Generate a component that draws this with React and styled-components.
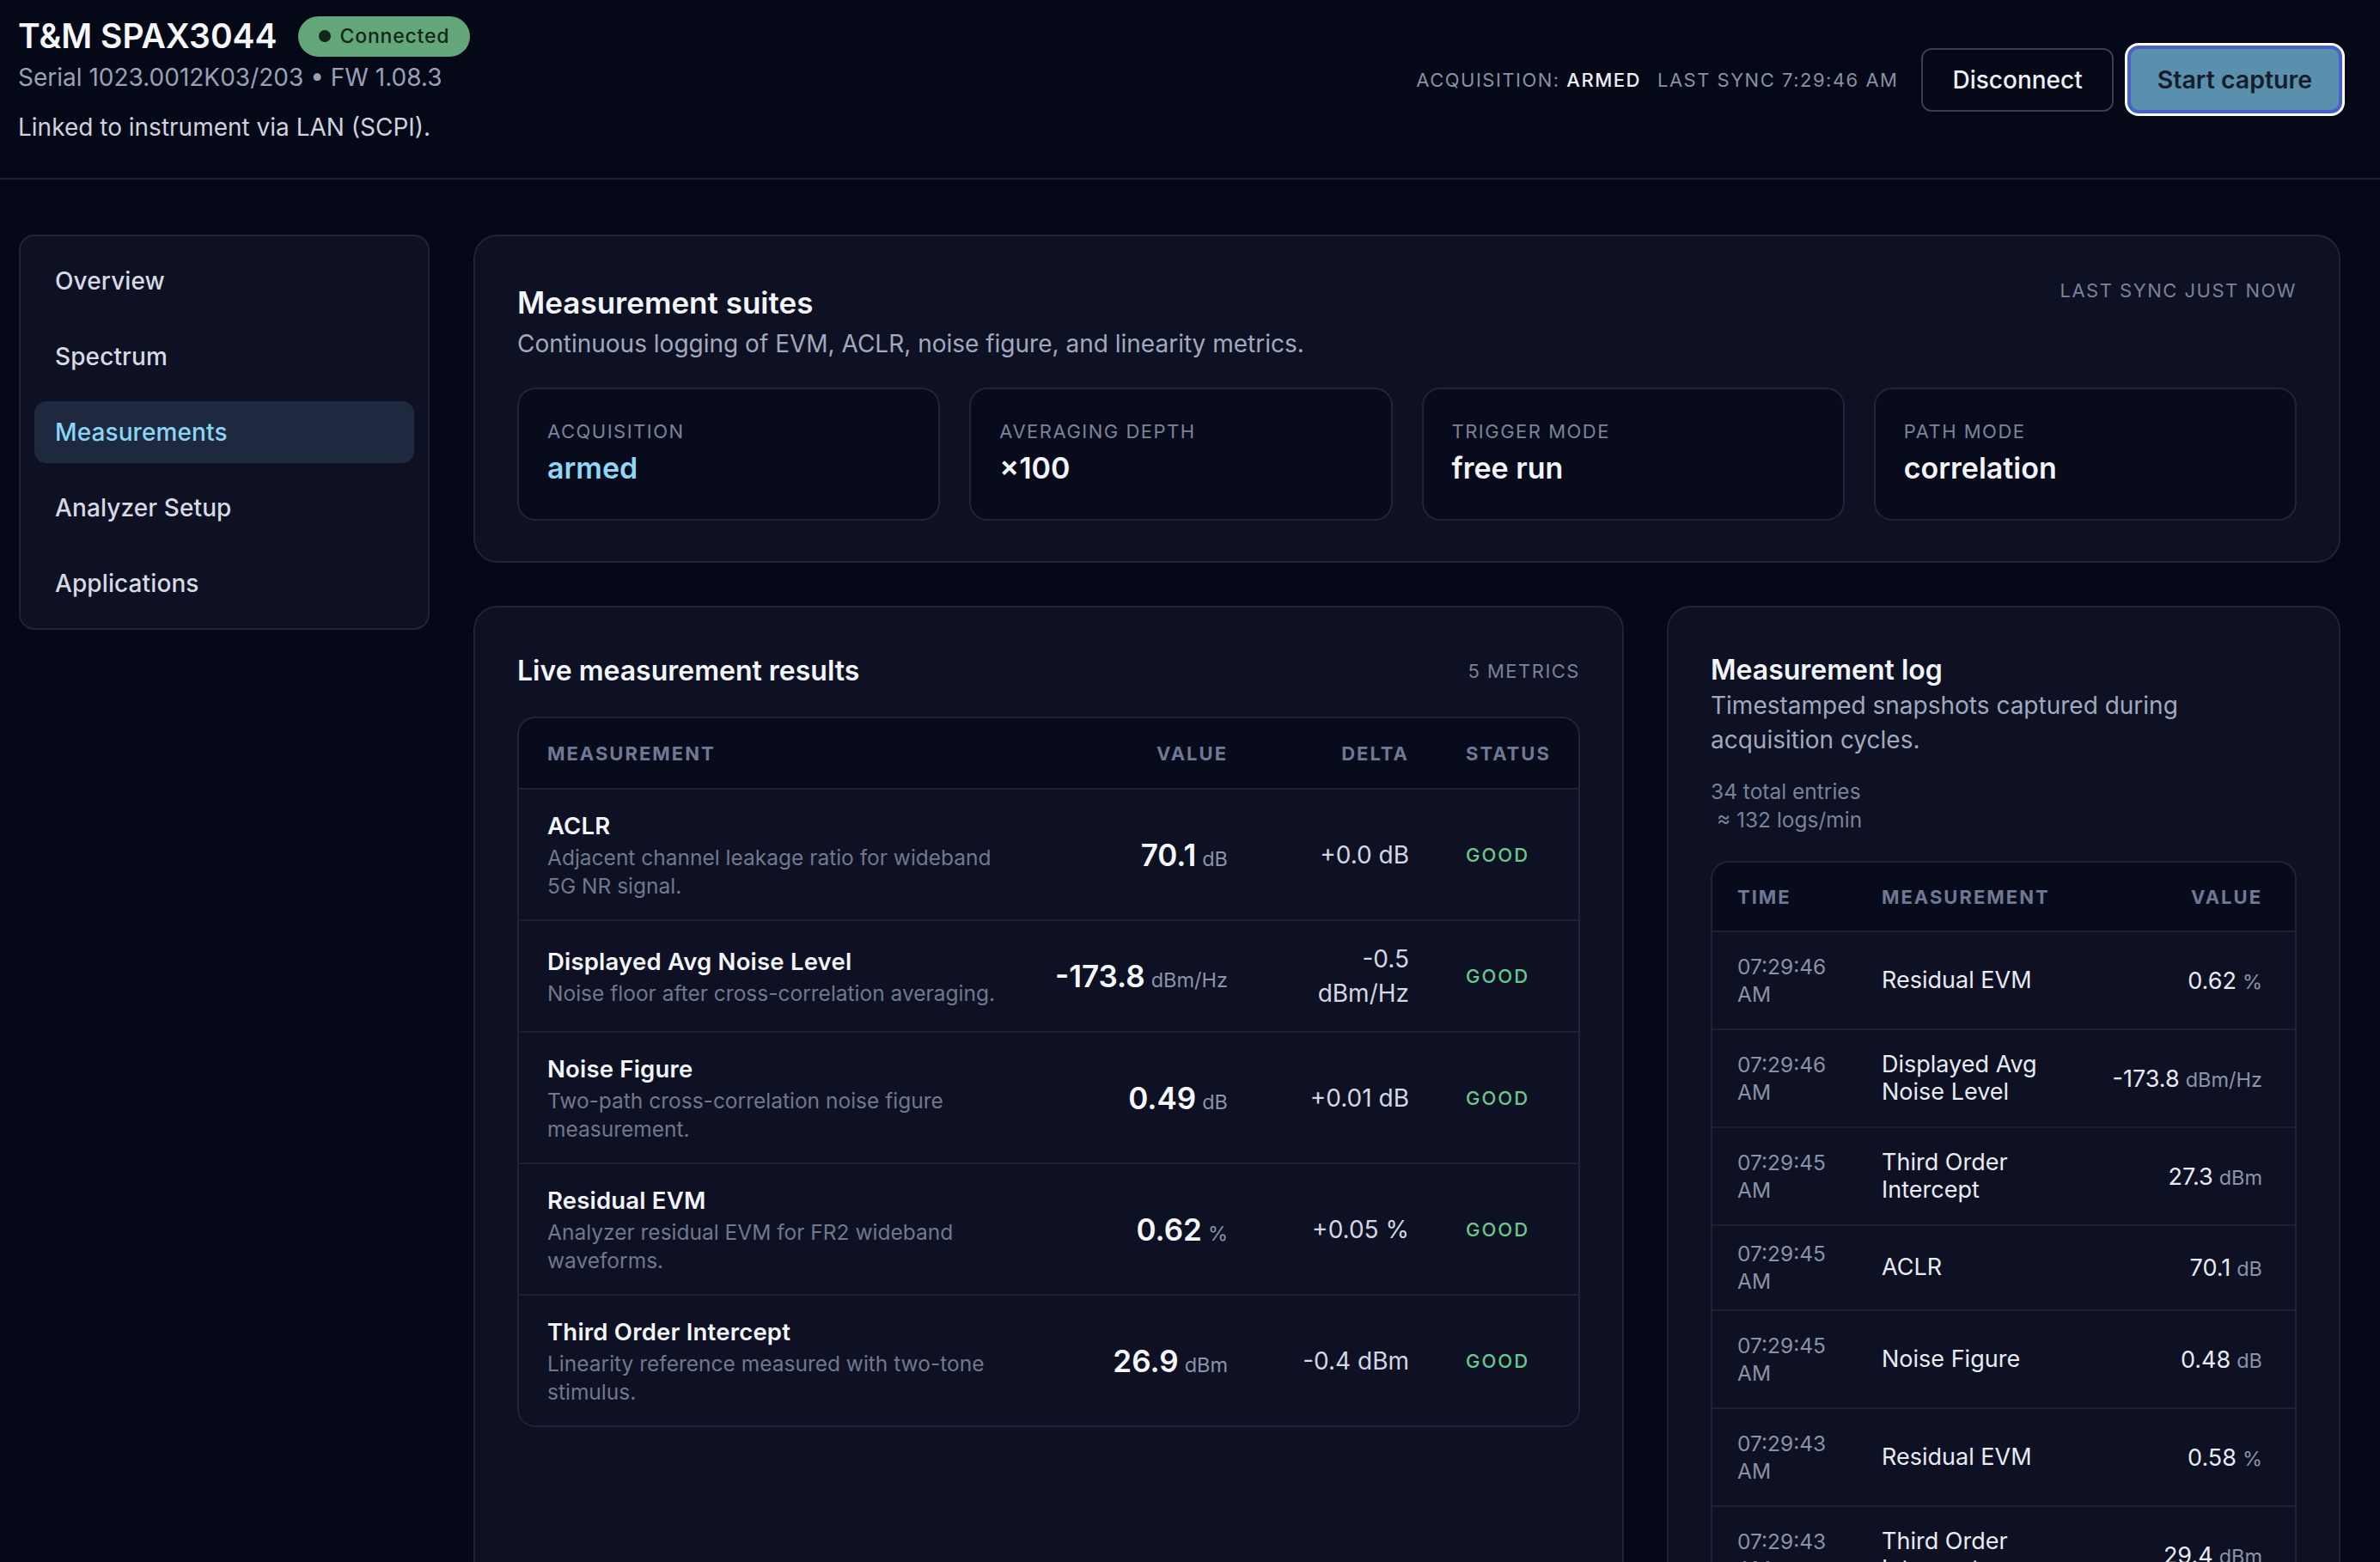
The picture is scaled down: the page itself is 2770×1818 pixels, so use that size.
import styled, { createGlobalStyle } from 'styled-components';

const GlobalStyle = createGlobalStyle`
  * { box-sizing: border-box; }
  body {
    margin: 0;
    background: #050817;
    color: #eef1f7;
    font-family: Inter, 'Noto Sans', 'Liberation Sans', sans-serif;
  }
`;

const Page = styled.div`
  min-height: 100vh;
  background: #050817;
`;

// header bar
const Header = styled.header`
  display: flex;
  justify-content: space-between;
  align-items: center;
  padding: 18px 44px 40px 21px;
  border-bottom: 2px solid #1d2233;
`;

const HeaderInfo = styled.div`
  display: flex;
  flex-direction: column;
`;

const TitleRow = styled.div`
  display: flex;
  align-items: center;
  gap: 24px;
`;

const DeviceName = styled.h1`
  margin: 0;
  font-size: 39px;
  line-height: 48px;
  font-weight: 600;
  color: #f5f7fb;
`;

const Badge = styled.span`
  display: inline-flex;
  align-items: center;
  gap: 11px;
  height: 47px;
  padding: 0 24px;
  border-radius: 24px;
  background: #62a67a;
  color: #15251b;
  font-size: 23px;
  font-weight: 500;
  letter-spacing: 0.8px;
`;

const Dot = styled.span`
  width: 14px;
  height: 14px;
  border-radius: 50%;
  background: #15251b;
`;

const SerialLine = styled.div`
  margin-top: 5px;
  font-size: 28px;
  line-height: 38px;
  color: #98a1b6;
`;

const LinkLine = styled.div`
  margin-top: 20px;
  font-size: 28px;
  line-height: 38px;
  color: #cdd3df;
`;

const HeaderActions = styled.div`
  display: flex;
  align-items: center;
  gap: 16px;
`;

const StatusGroup = styled.div`
  display: flex;
  gap: 19px;
  margin-right: 11px;
`;

const StatusText = styled.span`
  font-size: 22px;
  letter-spacing: 1.5px;
  text-transform: uppercase;
  color: #8790a5;

  strong {
    font-weight: 500;
    color: #eef1f7;
  }
`;

const GhostButton = styled.button`
  height: 74px;
  padding: 0 34px;
  border: 2px solid #373e52;
  border-radius: 12px;
  background: transparent;
  color: #eceff5;
  font-family: inherit;
  font-size: 28px;
  font-weight: 500;
`;

const PrimaryButton = styled.button`
  height: 79px;
  padding: 0 31px;
  border: 4px solid #4b5fc9;
  border-radius: 13px;
  background: #5990ad;
  box-shadow: 0 0 0 3px #ffffff;
  color: #161c2b;
  font-family: inherit;
  font-size: 28.5px;
  font-weight: 600;
`;

// body layout
const Body = styled.div`
  display: grid;
  grid-template-columns: 478px minmax(0, 1fr);
  gap: 51px;
  align-items: start;
  padding: 64px 46px 0 22px;
`;

const Sidebar = styled.nav`
  display: flex;
  flex-direction: column;
  gap: 16px;
  padding: 16px;
  border: 2px solid #1f2436;
  border-radius: 18px;
  background: #0d1123;
`;

const NavItem = styled.div`
  height: 72px;
  display: flex;
  align-items: center;
  padding: 0 24px;
  border-radius: 14px;
  font-size: 28px;
  font-weight: 500;
  letter-spacing: 0.1px;
  background: ${(p) => (p.$active ? '#1e2940' : 'transparent')};
  color: ${(p) => (p.$active ? '#8ad6f5' : '#d6dae5')};
`;

const Main = styled.main`
  display: flex;
  flex-direction: column;
  gap: 50px;
`;

const Card = styled.section`
  padding: ${(p) => p.$pad || '52px 49px 48px'};
  border: 2px solid #1f2436;
  border-radius: 28px;
  background: #0d1123;
`;

const CardHead = styled.div`
  display: flex;
  justify-content: space-between;
  align-items: ${(p) => (p.$center ? 'center' : 'flex-start')};
`;

const CardTitle = styled.h2`
  margin: 0;
  font-size: ${(p) => p.$size || '32px'};
  line-height: ${(p) => p.$lh || '44px'};
  font-weight: 600;
  color: #f3f5fa;
`;

const CardText = styled.p`
  margin: ${(p) => p.$margin || '5px 0 0'};
  font-size: 28px;
  line-height: 40px;
  color: #a1a9bd;
`;

const Meta = styled.span`
  font-size: 22px;
  line-height: 22px;
  letter-spacing: 1.5px;
  text-transform: uppercase;
  color: #7a8298;
  margin-top: ${(p) => p.$top || '0'};
`;

const StatGrid = styled.div`
  display: grid;
  grid-template-columns: repeat(4, minmax(0, 1fr));
  gap: 34px;
  margin-top: 31px;
`;

const StatBox = styled.div`
  padding: 34px 33px 37px;
  border: 2px solid #20253a;
  border-radius: 21px;
  background: #080b1c;
`;

const StatLabel = styled.div`
  font-size: 22px;
  line-height: 30px;
  letter-spacing: 1.5px;
  text-transform: uppercase;
  color: #7b8399;
`;

const StatValue = styled.div`
  margin-top: 6px;
  font-size: 34px;
  line-height: 44px;
  font-weight: 600;
  color: ${(p) => (p.$accent ? '#8ed8f6' : '#f3f5fa')};
`;

const Columns = styled.div`
  display: grid;
  grid-template-columns: 1339px minmax(0, 1fr);
  gap: 50px;
`;

// tables
const Table = styled.div`
  margin-top: 31px;
  border: 2px solid #20253a;
  border-radius: 21px;
  overflow: hidden;
`;

const ResultRow = styled.div`
  display: grid;
  grid-template-columns: minmax(0, 1fr) 250px 211px 164px;
  align-items: center;
  background: ${(p) => (p.$head ? '#080b1c' : '#0d1123')};
  min-height: ${(p) => (p.$head ? '81px' : 'auto')};
  & + & {
    border-top: 2px solid #1c2132;
  }
`;

const LogRow = styled.div`
  display: grid;
  grid-template-columns: 166px minmax(0, 1fr) 232px;
  align-items: center;
  background: ${(p) => (p.$head ? '#080b1c' : '#0d1123')};
  min-height: ${(p) => (p.$head ? '79px' : 'auto')};
  padding: ${(p) => (p.$head ? '0' : p.$compact ? '16px 0 17px' : '24px 0')};
  & + & {
    border-top: 2px solid #1c2132;
  }
`;

const HeadCell = styled.div`
  padding: ${(p) => p.$pad || '0 33px'};
  text-align: ${(p) => (p.$right ? 'right' : 'left')};
  font-size: 22px;
  font-weight: 700;
  letter-spacing: 2px;
  text-transform: uppercase;
  color: #6f7993;
`;

const NameCell = styled.div`
  padding: 24px 33px 22px;
`;

const RowName = styled.div`
  font-size: 27.5px;
  line-height: 36px;
  font-weight: 600;
  letter-spacing: 0.2px;
  color: #f3f5fa;
`;

const RowDesc = styled.div`
  margin-top: 3px;
  font-size: 24.5px;
  line-height: 33px;
  color: #70788d;
`;

const ValueCell = styled.div`
  padding: ${(p) => p.$pad || '0 33px 0 0'};
  text-align: right;
  white-space: nowrap;
`;

const BigNumber = styled.span`
  font-size: 35px;
  font-weight: 600;
  color: #f5f7fb;
`;

const Number = styled.span`
  font-size: 27px;
  color: #e8ebf2;
`;

const Unit = styled.span`
  margin-left: 7px;
  font-size: 23.5px;
  color: #8b93a8;
`;

const DeltaCell = styled.div`
  padding: 24px 33px;
  text-align: right;
  font-size: 28px;
  line-height: 40px;
  color: #d2d7e2;
`;

const StatusCell = styled.div`
  padding: 0 33px;
  font-size: 22px;
  font-weight: 500;
  letter-spacing: 2px;
  color: #6cc78c;
`;

const TimeCell = styled.div`
  padding: 0 0 0 29px;
  font-size: 24.5px;
  line-height: 32px;
  color: #8a92a6;
`;

const LogName = styled.div`
  padding: 0 34px 0 31px;
  font-size: 27px;
  line-height: 32px;
  color: #e8ebf2;
`;

const MetaLines = styled.div`
  margin-top: 24px;
  font-size: 24.5px;
  line-height: 33px;
  color: #7a8298;
  white-space: pre;
`;

const navItems = ['Overview', 'Spectrum', 'Measurements', 'Analyzer Setup', 'Applications'];

const stats = [
  { label: 'Acquisition', value: 'armed', accent: true },
  { label: 'Averaging depth', value: '×100' },
  { label: 'Trigger mode', value: 'free run' },
  { label: 'Path mode', value: 'correlation' },
];

const results = [
  { name: 'ACLR', desc: 'Adjacent channel leakage ratio for wideband 5G NR signal.', value: '70.1', unit: 'dB', delta: '+0.0 dB' },
  { name: 'Displayed Avg Noise Level', desc: 'Noise floor after cross-correlation averaging.', value: '-173.8', unit: 'dBm/Hz', delta: '-0.5 dBm/Hz' },
  { name: 'Noise Figure', desc: 'Two-path cross-correlation noise figure measurement.', value: '0.49', unit: 'dB', delta: '+0.01 dB' },
  { name: 'Residual EVM', desc: 'Analyzer residual EVM for FR2 wideband waveforms.', value: '0.62', unit: '%', delta: '+0.05 %' },
  { name: 'Third Order Intercept', desc: 'Linearity reference measured with two-tone stimulus.', value: '26.9', unit: 'dBm', delta: '-0.4 dBm' },
];

const logs = [
  { time: '07:29:46 AM', name: 'Residual EVM', value: '0.62', unit: '%' },
  { time: '07:29:46 AM', name: 'Displayed Avg Noise Level', value: '-173.8', unit: 'dBm/Hz' },
  { time: '07:29:45 AM', name: 'Third Order Intercept', value: '27.3', unit: 'dBm' },
  { time: '07:29:45 AM', name: 'ACLR', value: '70.1', unit: 'dB', compact: true },
  { time: '07:29:45 AM', name: 'Noise Figure', value: '0.48', unit: 'dB' },
  { time: '07:29:43 AM', name: 'Residual EVM', value: '0.58', unit: '%' },
  { time: '07:29:43 AM', name: 'Third Order Intercept', value: '29.4', unit: 'dBm' },
  { time: '07:29:43 AM', name: 'ACLR', value: '69.8', unit: 'dB', compact: true },
  { time: '07:29:42 AM', name: 'Noise Figure', value: '0.50', unit: 'dB' },
];

function App() {
  return (
    <Page>
      <GlobalStyle />
      <Header>
        <HeaderInfo>
          <TitleRow>
            <DeviceName>T&amp;M SPAX3044</DeviceName>
            <Badge>
              <Dot />
              Connected
            </Badge>
          </TitleRow>
          <SerialLine>Serial 1023.0012K03/203 • FW 1.08.3</SerialLine>
          <LinkLine>Linked to instrument via LAN (SCPI).</LinkLine>
        </HeaderInfo>
        <HeaderActions>
          <StatusGroup>
            <StatusText>
              Acquisition: <strong>armed</strong>
            </StatusText>
            <StatusText>Last sync 7:29:46 AM</StatusText>
          </StatusGroup>
          <GhostButton>Disconnect</GhostButton>
          <PrimaryButton>Start capture</PrimaryButton>
        </HeaderActions>
      </Header>

      <Body>
        <Sidebar>
          {navItems.map((item) => (
            <NavItem key={item} $active={item === 'Measurements'}>
              {item}
            </NavItem>
          ))}
        </Sidebar>

        <Main>
          <Card $pad='54px 49px 47px'>
            <CardHead>
              <div>
                <CardTitle $size='35px' $lh='46px'>Measurement suites</CardTitle>
                <CardText>Continuous logging of EVM, ACLR, noise figure, and linearity metrics.</CardText>
              </div>
              <Meta $top='-2px'>Last sync just now</Meta>
            </CardHead>
            <StatGrid>
              {stats.map((s) => (
                <StatBox key={s.label}>
                  <StatLabel>{s.label}</StatLabel>
                  <StatValue $accent={s.accent}>{s.value}</StatValue>
                </StatBox>
              ))}
            </StatGrid>
          </Card>

          <Columns>
            <Card>
              <CardHead $center>
                <CardTitle>Live measurement results</CardTitle>
                <Meta>5 metrics</Meta>
              </CardHead>
              <Table>
                <ResultRow $head>
                  <HeadCell>Measurement</HeadCell>
                  <HeadCell $right $pad='0 33px 0 0'>Value</HeadCell>
                  <HeadCell $right>Delta</HeadCell>
                  <HeadCell>Status</HeadCell>
                </ResultRow>
                {results.map((r) => (
                  <ResultRow key={r.name}>
                    <NameCell>
                      <RowName>{r.name}</RowName>
                      <RowDesc>{r.desc}</RowDesc>
                    </NameCell>
                    <ValueCell>
                      <BigNumber>{r.value}</BigNumber>
                      <Unit>{r.unit}</Unit>
                    </ValueCell>
                    <DeltaCell>{r.delta}</DeltaCell>
                    <StatusCell>GOOD</StatusCell>
                  </ResultRow>
                ))}
              </Table>
            </Card>

            <Card>
              <CardTitle $lh='42px'>Measurement log</CardTitle>
              <CardText $margin='0'>
                Timestamped snapshots captured during acquisition cycles.
              </CardText>
              <MetaLines>{'34 total entries\n ≈ 132 logs/min'}</MetaLines>
              <Table>
                <LogRow $head>
                  <HeadCell $pad='0 0 0 29px'>Time</HeadCell>
                  <HeadCell $pad='0 34px 0 31px'>Measurement</HeadCell>
                  <HeadCell $right $pad='0 38px 0 0'>Value</HeadCell>
                </LogRow>
                {logs.map((l, i) => (
                  <LogRow key={i} $compact={l.compact}>
                    <TimeCell>{l.time}</TimeCell>
                    <LogName>{l.name}</LogName>
                    <ValueCell $pad='0 38px 0 8px'>
                      <Number>{l.value}</Number>
                      <Unit>{l.unit}</Unit>
                    </ValueCell>
                  </LogRow>
                ))}
              </Table>
            </Card>
          </Columns>
        </Main>
      </Body>
    </Page>
  );
}

export default App;
